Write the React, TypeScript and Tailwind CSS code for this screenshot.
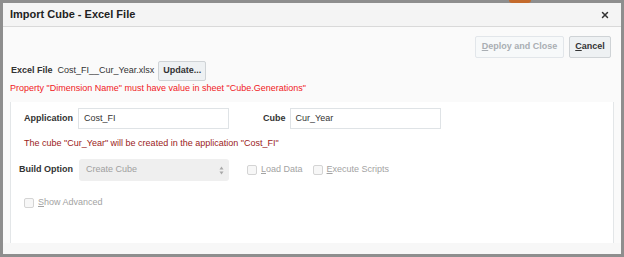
import { X } from "lucide-react";

function Checkbox({ label, underline }: { label: string; underline: string }) {
  const rest = label.slice(1);
  return (
    <label className="flex items-center gap-[4px] text-[9px] text-[#a3a3a3]">
      <span className="h-[10px] w-[10px] rounded-[2px] border border-[#d4d4d4] bg-[#f7f7f7]" />
      <span>
        <span className="underline">{underline}</span>
        {rest}
      </span>
    </label>
  );
}

export default function App() {
  return (
    <div
      className="flex h-[257px] w-[624px] flex-col bg-[#8e8e8e] px-[3px] pb-[3px] text-[#333]"
      style={{ fontFamily: '"Liberation Sans", Arial, sans-serif' }}
    >
      {/* background strip behind the dialog */}
      <div className="flex h-[3px] shrink-0">
        <div className="ml-[506px] h-[3px] w-[22px] rounded-b-full bg-[#c46a2c]" />
      </div>

      <div className="flex flex-1 flex-col bg-[#fafafa]">
        {/* title bar */}
        <div className="flex h-[24px] shrink-0 items-center justify-between border-b border-[#d9d9d9] bg-[#f4f4f4] pl-[7px] pr-[11px]">
          <span className="text-[11px] font-bold text-[#222]">Import Cube - Excel File</span>
          <X size={10} strokeWidth={3.5} className="text-[#333]" />
        </div>

        {/* toolbar */}
        <div className="flex justify-end gap-[5px] pr-[10px] pt-[9px]">
          <button className="h-[22px] w-[89px] rounded-[2px] border border-[#e2e6ea] bg-[#f7f9fa] text-[9px] font-bold text-[#a9aeb3]">
            <span className="underline">D</span>eploy and Close
          </button>
          <button className="h-[22px] w-[42px] rounded-[2px] border border-[#cfd3d6] bg-[#eef1f3] text-[9px] font-bold text-[#333]">
            <span className="underline">C</span>ancel
          </button>
        </div>

        {/* excel file row */}
        <div className="mt-[3px] flex items-center pl-[8px]">
          <span className="text-[9px] font-bold text-[#333]">Excel File</span>
          <span className="ml-[5px] text-[9px] text-[#333]">Cost_FI__Cur_Year.xlsx</span>
          <button className="ml-[4px] h-[20px] w-[48px] rounded-[2px] border border-[#cfd3d6] bg-[#eef1f3] text-[9px] font-bold text-[#333]">
            Update...
          </button>
        </div>
        <div className="mt-[1px] pl-[7px] text-[9px] leading-[12px] text-[#f0201c]">
          Property "Dimension Name" must have value in sheet "Cube.Generations"
        </div>

        {/* content panel */}
        <div className="mx-[7px] mt-[8px] flex flex-1 flex-col border-x border-[#e3e6e8] bg-white">
          <div className="mt-[6px] flex items-center">
            <span className="ml-[13px] text-[9px] font-bold text-[#333]">Application</span>
            <div className="ml-[5px] flex h-[21px] w-[151px] items-center border border-[#dfe3e6] bg-white px-[5px] text-[9px] text-[#333]">
              Cost_FI
            </div>
            <span className="ml-[34px] text-[9px] font-bold text-[#333]">Cube</span>
            <div className="ml-[4px] flex h-[21px] w-[151px] items-center border border-[#dfe3e6] bg-white px-[5px] text-[9px] text-[#333]">
              Cur_Year
            </div>
          </div>

          <div className="ml-[13px] mt-[9px] text-[9px] leading-[11px] text-[#9b1b1b]">
            The cube "Cur_Year" will be created in the application "Cost_FI"
          </div>

          <div className="mt-[10px] flex items-center">
            <span className="ml-[8px] text-[9px] font-bold text-[#333]">Build Option</span>
            <div className="ml-[6px] flex h-[22px] w-[150px] items-center justify-between rounded-[3px] bg-[#efefef] pl-[7px] pr-[5px] text-[9px] text-[#a0a0a0]">
              <span>Create Cube</span>
              <svg width="5" height="9" viewBox="0 0 5 9" className="text-[#a8a8a8]">
                <path d="M2.5 0.5L4.5 3.5H0.5Z" fill="currentColor" />
                <path d="M2.5 8.5L4.5 5.5H0.5Z" fill="currentColor" />
              </svg>
            </div>
            <div className="ml-[18px]">
              <Checkbox label="Load Data" underline="L" />
            </div>
            <div className="ml-[10px]">
              <Checkbox label="Execute Scripts" underline="E" />
            </div>
          </div>

          <div className="ml-[13px] mt-[15px]">
            <Checkbox label="Show Advanced" underline="S" />
          </div>
        </div>

        <div className="h-[11px] shrink-0 bg-[#f7f7f7]" />
      </div>
    </div>
  );
}
